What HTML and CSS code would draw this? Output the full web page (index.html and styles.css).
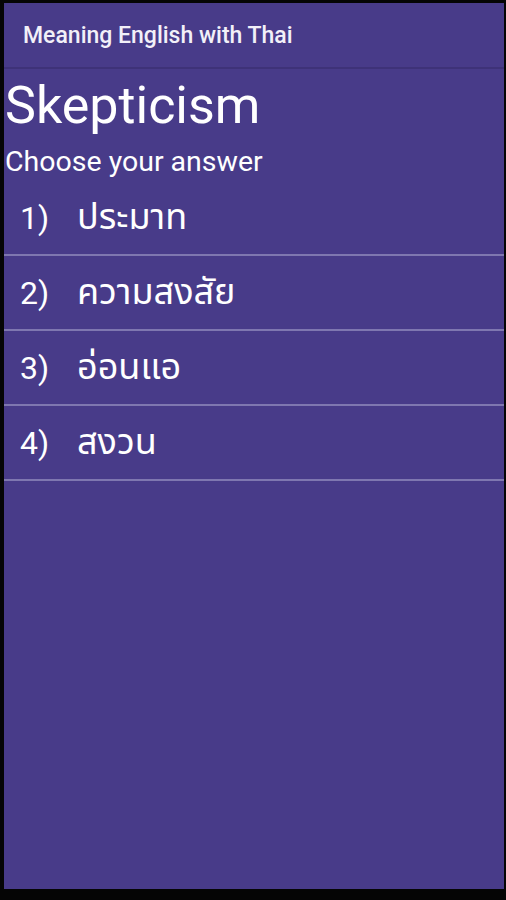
FILE: index.html
```html
<!DOCTYPE html>
<html lang="th">
<head>
    <meta charset="UTF-8">
    <meta name="viewport" content="width=device-width, initial-scale=1.0">
    <title>Meaning English with Thai</title>
    <link rel="stylesheet" href="styles.css">
</head>
<body>

<div class="screen">
    <header class="app-bar">
        <h1>Meaning English with Thai</h1>
    </header>

    <main class="quiz">
        <h2 class="word">Skepticism</h2>
        <p class="prompt">Choose your answer</p>

        <ul class="answers">
            <li><span class="num">1)</span> <span class="text">ประมาท</span></li>
            <li><span class="num">2)</span> <span class="text">ความสงสัย</span></li>
            <li><span class="num">3)</span> <span class="text">อ่อนแอ</span></li>
            <li><span class="num">4)</span> <span class="text">สงวน</span></li>
        </ul>
    </main>
</div>

</body>
</html>
```

FILE: styles.css
```css
html, body {
    margin: 0;
    padding: 0;
    height: 100%;
    background-color: #050505;
}
body {
    font-family: Roboto, "Noto Sans Thai", "Noto Sans", sans-serif;
    color: #ffffff;
    padding: 3px 2px 11px 4px;
    box-sizing: border-box;
}
.screen {
    height: 100%;
    background-color: #483b89;
    display: flex;
    flex-direction: column;
}
.app-bar {
    height: 64px;
    display: flex;
    align-items: center;
    padding-left: 19px;
    border-bottom: 2px solid #3e3278;
}
.app-bar h1 {
    margin: 0;
    font-size: 23px;
    font-weight: 500;
    color: #f2f0f8;
}
.quiz {
    padding-top: 10px;
}
.word {
    margin: 0 0 0 1px;
    font-size: 52px;
    font-weight: 400;
    line-height: 54px;
}
.prompt {
    margin: 14px 0 0 1px;
    font-size: 28.5px;
    line-height: 30px;
}
.answers {
    list-style: none;
    margin: 0;
    padding: 4px 0 0;
}
.answers li {
    height: 73px;
    display: flex;
    align-items: center;
    padding-left: 16px;
    border-bottom: 2px solid #7f77b0;
    font-size: 32px;
}
.answers .num {
    width: 57px;
}
.answers .text {
    font-size: 36px;
}
```
